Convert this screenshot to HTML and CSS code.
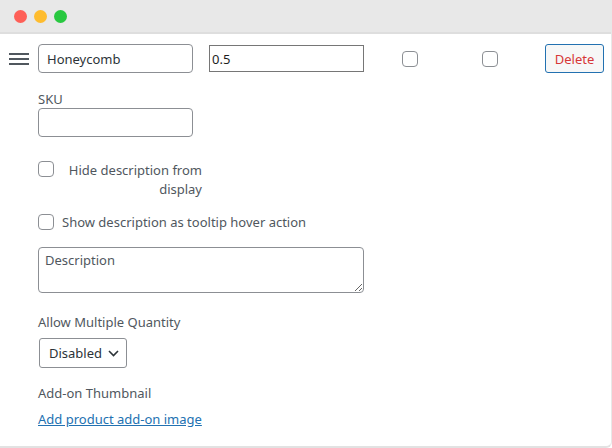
FILE: index.html
```html
<!DOCTYPE html>
<html lang="en">
<head>
    <meta charset="UTF-8">
    <title>Add-on option</title>
    <link rel="stylesheet" href="styles.css">
</head>
<body>

<div class="window">
    <div class="titlebar">
        <span class="dot red"></span>
        <span class="dot yellow"></span>
        <span class="dot green"></span>
    </div>

    <div class="content">
        <div class="option-row">
            <span class="handle">
                <svg width="20" height="12" viewBox="0 0 20 12">
                    <path d="M0 1h20M0 6h20M0 11h20" stroke="#50575e" stroke-width="2"/>
                </svg>
            </span>
            <input class="text-field name-field" type="text" value="Honeycomb">
            <input class="price-field" type="text" value="0.5">
            <input class="check check-one" type="checkbox">
            <input class="check check-two" type="checkbox">
            <button class="delete-btn">Delete</button>
        </div>

        <div class="details">
            <label class="field-label">SKU</label>
            <input class="text-field" type="text">

            <div class="hide-row">
                <input class="check" type="checkbox">
                <span class="hide-label">Hide description from display</span>
            </div>

            <div class="tooltip-row">
                <input class="check" type="checkbox">
                <span>Show description as tooltip hover action</span>
            </div>

            <textarea class="desc" placeholder="Description"></textarea>

            <label class="field-label qty-label">Allow Multiple Quantity</label>
            <div class="select">
                <span>Disabled</span>
                <svg width="11" height="7" viewBox="0 0 11 7">
                    <path d="M1 1l4.5 4.5L10 1" stroke="#2c3338" stroke-width="1.6" fill="none"/>
                </svg>
            </div>

            <label class="field-label thumb-label">Add-on Thumbnail</label>
            <a class="add-link" href="#">Add product add-on image</a>
        </div>
    </div>
</div>

</body>
</html>
```

FILE: styles.css
```css
body {
    margin: 0;
    font-family: "Noto Sans", "Open Sans", sans-serif;
    font-size: 13px;
    color: #50575e;
    background-color: #ffffff;
}

.window {
    width: 611px;
    height: 446px;
    border-bottom: 2px solid #e2e2e2;
    border-right: 1px solid #e8e8e8;
    border-radius: 0 0 6px 0;
    overflow: hidden;
}

.titlebar {
    height: 32px;
    background-color: #e8e8e8;
    border-bottom: 2px solid #dedede;
    display: flex;
    align-items: center;
    gap: 7px;
    padding-left: 14px;
}

.dot {
    width: 13px;
    height: 13px;
    border-radius: 50%;
}

.dot.red { background-color: #fe5f57; }
.dot.yellow { background-color: #febc2e; }
.dot.green { background-color: #28c840; }

.content {
    padding: 10px 0 0 9px;
}

.option-row {
    display: flex;
    align-items: center;
    height: 29px;
}

.option-row > * {
    flex-shrink: 0;
}

.handle {
    width: 20px;
    display: flex;
}

.text-field {
    width: 155px;
    height: 29px;
    box-sizing: border-box;
    border: 1px solid #8c8f94;
    border-radius: 4px;
    padding: 0 8px;
    font-family: inherit;
    font-size: 13px;
    color: #2c3338;
}

.name-field {
    margin-left: 9px;
}

.price-field {
    margin-left: 16px;
    width: 155px;
    height: 27px;
    box-sizing: border-box;
    border: 1px solid #767676;
    border-radius: 0;
    padding: 0 2px;
    font-family: inherit;
    font-size: 13px;
    color: #1e1e1e;
}

.check {
    appearance: none;
    width: 16px;
    height: 16px;
    margin: 0;
    border: 1px solid #8c8f94;
    border-radius: 4px;
    background-color: #ffffff;
    flex-shrink: 0;
}

.check-one {
    margin-left: 38px;
}

.check-two {
    margin-left: 64px;
}

.delete-btn {
    margin-left: 47px;
    width: 59px;
    height: 29px;
    border: 1px solid #2271b1;
    border-radius: 3px;
    background-color: #f6f7f7;
    color: #d63638;
    font-family: inherit;
    font-size: 13px;
    padding: 0;
}

.details {
    padding-left: 29px;
    display: flex;
    flex-direction: column;
    align-items: flex-start;
}

.field-label {
    line-height: 18px;
}

.details > .field-label:first-child {
    margin-top: 17px;
}

.hide-row {
    margin-top: 24px;
    display: flex;
    align-items: flex-start;
}

.hide-label {
    width: 148px;
    text-align: right;
    line-height: 19px;
}

.tooltip-row {
    margin-top: 14px;
    display: flex;
    align-items: center;
    gap: 8px;
}

.desc {
    margin-top: 16px;
    width: 326px;
    height: 46px;
    box-sizing: border-box;
    border: 1px solid #8c8f94;
    border-radius: 4px;
    padding: 3px 6px;
    font-family: inherit;
    font-size: 13px;
    color: #2c3338;
}

.desc::placeholder {
    color: #50575e;
}

.qty-label {
    margin-top: 20px;
}

.select {
    margin-top: 7px;
    margin-left: 1px;
    width: 88px;
    height: 30px;
    box-sizing: border-box;
    border: 1px solid #8c8f94;
    border-radius: 3px;
    display: flex;
    align-items: center;
    justify-content: space-between;
    padding: 0 7px 0 9px;
    color: #2c3338;
}

.thumb-label {
    margin-top: 16px;
}

.add-link {
    margin-top: 8px;
    color: #2271b1;
}
```
